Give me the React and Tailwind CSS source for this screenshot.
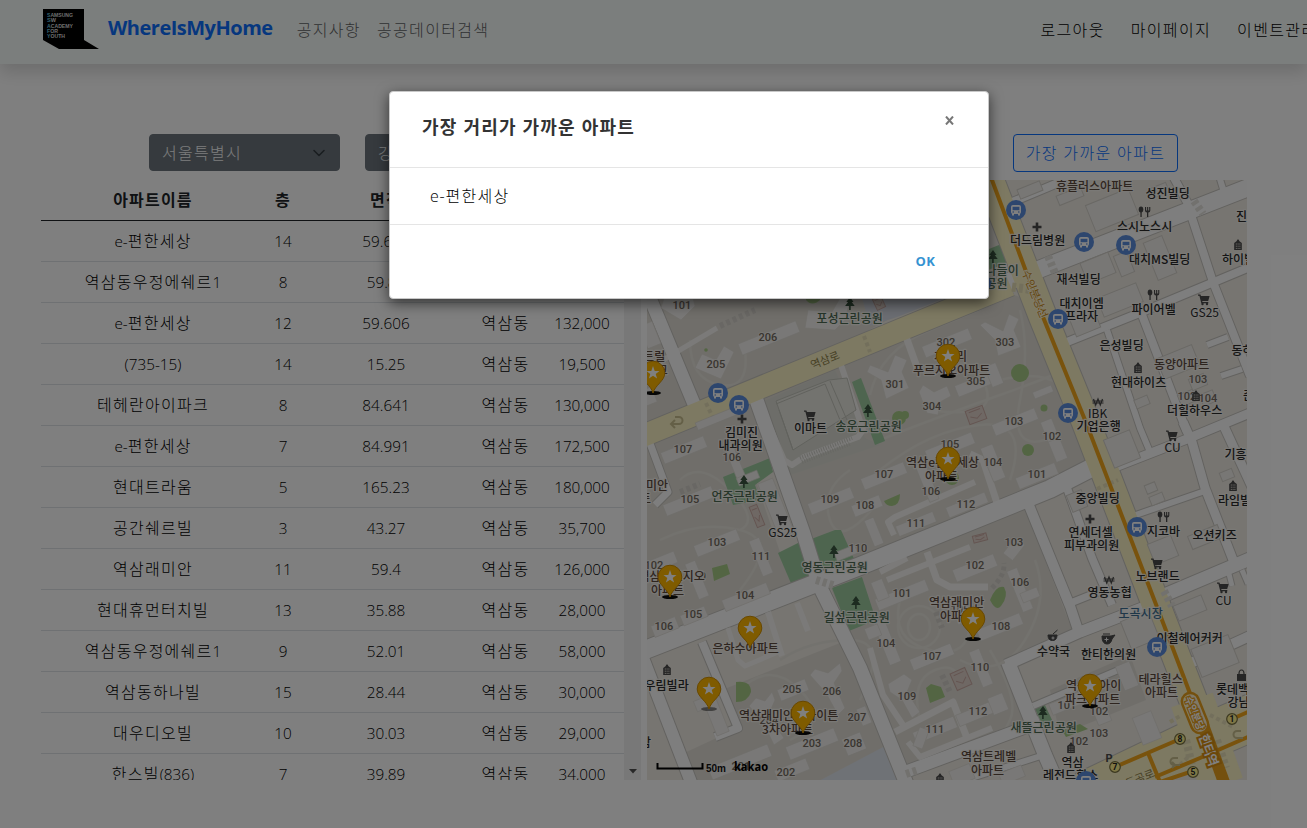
import React from "react";

const KR = "font-['Open_Sans','Noto_Sans_CJK_KR',sans-serif]";

const rows = [
  ["e-편한세상", "14", "59.606", "역삼동", "128,000"],
  ["역삼동우정에쉐르1", "8", "59.88", "역삼동", "62,000"],
  ["e-편한세상", "12", "59.606", "역삼동", "132,000"],
  ["(735-15)", "14", "15.25", "역삼동", "19,500"],
  ["테헤란아이파크", "8", "84.641", "역삼동", "130,000"],
  ["e-편한세상", "7", "84.991", "역삼동", "172,500"],
  ["현대트라움", "5", "165.23", "역삼동", "180,000"],
  ["공간쉐르빌", "3", "43.27", "역삼동", "35,700"],
  ["역삼래미안", "11", "59.4", "역삼동", "126,000"],
  ["현대휴먼터치빌", "13", "35.88", "역삼동", "28,000"],
  ["역삼동우정에쉐르1", "9", "52.01", "역삼동", "58,000"],
  ["역삼동하나빌", "15", "28.44", "역삼동", "30,000"],
  ["대우디오빌", "10", "30.03", "역삼동", "29,000"],
  ["한스빌(836)", "7", "39.89", "역삼동", "34,000"],
];

// Hangul is set slightly wider than the Latin digits beside it.
function Mixed({ text }) {
  return text
    .split(/([가-힣]+)/)
    .filter(Boolean)
    .map((part, i) =>
      /[가-힣]/.test(part) ? (
        <span key={i} className="text-[16px] tracking-[1.25px]">{part}</span>
      ) : (
        <span key={i}>{part}</span>
      )
    );
}

// ---- Map data: [points, width] ----
const roads = [
  ["1000,285 1050,265 1260,183", 17],
  ["1173,176 1187,202 1192,218 1213,282 1250,376", 8],
  ["1219,176 1224,192", 6],
  ["1062,344 1142,312 1250,267", 8],
  ["1142,315 1187,432", 8],
  ["1107,330 1140,428 1150,452", 6],
  ["1105,471 1187,439 1250,413", 9],
  ["1183,422 1192,442 1205,488 1235,565", 9],
  ["1130,517 1205,491", 6],
  ["1222,422 1252,487", 9],
  ["1155,599 1252,558", 13],
  ["1095,466 1050,489 860,566 640,652", 18],
  ["1067,488 1092,558 1112,605", 8],
  ["1028,503 1070,606 1080,636", 10],
  ["1068,604 1098,592", 7],
  ["1006,665 1080,632 1150,605", 11],
  ["1008,662 1045,755 1058,785", 14],
  ["1033,706 1123,668", 6],
  ["755,396 803,532 820,587 860,668 909,790", 14],
  ["640,270 650,298 694,404", 13],
  ["648,438 668,492 655,505", 7],
  ["905,772 1040,722", 12],
  ["965,780 1047,754", 6],
  ["702,642 738,728 715,737", 8],
  ["640,650 694,790", 12],
  ["1207,345 1228,337", 6],
  ["1221,376 1242,369", 6],
  ["1228,570 1232,586", 5],
  ["1242,570 1248,584", 5],
  ["1180,668 1250,636", 10],
  ["1010,203 1065,180", 8],
];
const lanes = [
  ["768,612 782,656", 6],
  ["797,603 808,631", 6],
  ["728,628 738,660 745,666 778,652", 5],
  ["758,400 784,460 792,465 804,457 858,437 863,430 840,362", 6],
  ["905,334 918,370", 7],
  ["907,558 880,572", 6],
  ["894,535 888,522 895,517 975,482", 6],
  ["970,454 983,460 997,503", 7],
  ["887,580 970,547", 6],
  ["927,552 937,580 950,587 988,587", 7],
  ["895,732 953,702 967,738", 7],
  ["870,648 883,695 905,728", 6],
  ["908,742 920,757 992,728", 6],
  ["658,363 717,328", 5],
];
const paths = [
  "M870 395 Q880 350 930 330 T1000 300",
  "M930 370 Q970 350 985 385 T930 410",
  "M1020 310 Q1030 350 1020 400 T1045 440",
  "M690 340 Q690 380 720 385 T745 350",
  "M880 470 Q930 430 980 425 T1010 480",
  "M900 600 Q890 640 930 650 T970 620",
  "M1035 560 Q1050 600 1025 640 T960 660",
  "M740 690 Q770 660 800 690 T790 740",
  "M990 650 Q1020 700 1010 720 T1000 735",
  "M920 720 Q910 680 935 670 T960 690",
  "M660 540 Q700 520 740 530 T740 590",
  "M680 480 Q700 460 730 490 T740 530",
  "M850 470 Q820 490 830 520 T880 500",
  "M780 660 Q810 640 850 640 T860 700",
  "M1000 380 Q1040 370 1060 385",
  "M880 440 Q930 420 1000 395 T1060 370",
];

// [cx, cy, w, h, rotation]
const bars = [
  [769, 338, 62, 12, -22], [684, 450, 46, 12, -22], [718, 418, 46, 8, -22], [689, 501, 52, 12, -22],
  [831, 501, 46, 12, -22], [947, 343, 50, 12, -22], [978, 383, 46, 12, -22], [994, 375, 12, 22, -22],
  [1015, 422, 46, 12, -22], [1053, 438, 38, 12, 68], [950, 447, 50, 12, -22], [993, 463, 36, 13, 68],
  [927, 482, 40, 10, 68], [884, 476, 46, 12, -22], [1037, 476, 42, 12, -22], [967, 505, 42, 11, -22],
  [916, 524, 40, 11, -22], [867, 506, 30, 12, -22], [874, 532, 28, 10, 68], [717, 543, 46, 12, -22],
  [761, 557, 38, 11, 68], [660, 563, 34, 12, -22], [697, 580, 38, 11, 68], [746, 597, 48, 12, -22],
  [694, 616, 26, 11, -22], [665, 627, 26, 12, -22], [793, 690, 30, 12, -22], [812, 744, 52, 14, -22],
  [854, 744, 20, 18, -22], [792, 770, 34, 12, -22], [740, 762, 64, 13, -22], [716, 716, 38, 13, 68],
  [702, 704, 14, 11, -22], [975, 568, 44, 13, -22], [902, 595, 54, 12, -22], [880, 590, 12, 20, -22],
  [887, 642, 46, 12, 68], [873, 632, 14, 12, -22], [1000, 627, 46, 12, -22], [932, 657, 44, 12, -22],
  [981, 668, 38, 11, 68], [980, 712, 48, 12, -22], [998, 704, 16, 18, -22], [935, 730, 44, 12, -22],
  [921, 738, 10, 20, 20], [1014, 549, 20, 12, -52], [1020, 590, 44, 11, 68], [1030, 595, 18, 10, -22],
  [864, 716, 18, 10, 68], [735, 462, 40, 9, 68], [748, 478, 22, 8, -22], [776, 508, 16, 58, -22],
  [1075, 700, 52, 12, -22], [1147, 728, 20, 29, -22], [1127, 676, 15, 26, -22], [1100, 710, 14, 28, -22],
  [1043, 392, 20, 7, -22], [645, 398, 20, 16, -22], [650, 335, 14, 24, -22], [1058, 450, 12, 22, -22],
  [960, 610, 14, 26, -22], [846, 553, 22, 9, -22], [1012, 775, 24, 12, -22], [962, 775, 22, 16, -22],
];
const lots = [
  [1112, 210, 46, 28, -22], [1098, 268, 30, 22, -22], [1124, 264, 14, 22, -22], [1160, 258, 20, 40, -22],
  [1120, 300, 42, 20, -22], [1083, 318, 26, 30, -22], [1178, 362, 38, 22, -22], [1142, 402, 14, 9, -22],
  [1198, 382, 16, 12, -22], [1187, 398, 16, 12, -22], [1208, 398, 14, 12, -22], [1122, 449, 28, 30, -22],
  [1151, 488, 11, 9, -22], [1157, 499, 14, 9, -22], [1163, 550, 25, 22, -22], [1205, 537, 32, 14, -22],
  [1227, 475, 13, 9, -22], [1190, 608, 30, 16, -22], [1077, 501, 16, 18, -22], [1215, 656, 40, 30, -22],
  [1140, 630, 30, 30, -22], [1030, 190, 24, 10, -22], [1160, 190, 16, 10, -22], [1070, 196, 26, 10, -22],
];
const polys = [
  "661,308 664,298 693,298 695,306 681,320",
  "695,368 702,354 716,360 724,346 734,352 721,379",
  "980,325 985,322 1003,331 1009,314 1019,319 1014,330 1021,347 998,356 995,340",
  "867,372 870,365 888,372 895,355 907,360 902,372 909,388 886,399 881,380",
  "919,392 923,385 934,392 947,386 951,396 940,402 938,415 927,413",
  "810,675 815,669 828,673 840,663 842,671 834,683 845,708 838,715 826,693",
  "749,706 756,698 765,701 772,692 775,700 768,716 784,738 774,745 762,720",
  "888,684 904,674 912,680 907,692 920,712 912,718 902,700 890,692",
  "805,328 808,310 832,312 840,298 850,300 845,320 835,330",
];
const parks = [
  "723,477 770,458 773,472 755,485 760,500 733,505",
  "852,382 861,378 885,441 875,445",
  "778,553 802,541 815,577 793,588",
  "806,541 835,530 841,530 855,561 825,573",
  "832,588 862,577 876,620 849,631",
  "1034,707 1044,703 1053,722 1043,726",
  "984,251 1004,243 1010,262 988,270",
];

// [text, x, baseline y]
const numbers = [
  ["101", 682, 309], ["206", 768, 341], ["205", 716, 368], ["107", 683, 453], ["106", 732, 461],
  ["105", 690, 503], ["109", 830, 503], ["108", 865, 509], ["302", 946, 346], ["303", 1005, 346],
  ["301", 895, 388], ["304", 932, 410], ["305", 976, 385], ["103", 1014, 425], ["102", 1052, 440],
  ["105", 950, 448], ["104", 993, 466], ["106", 931, 495], ["107", 884, 478], ["101", 1037, 478],
  ["112", 966, 508], ["111", 916, 527], ["103", 717, 546], ["111", 761, 560], ["102", 654, 569],
  ["104", 745, 599], ["105", 693, 618], ["106", 664, 630], ["110", 858, 552], ["205", 792, 693],
  ["206", 832, 695], ["204", 769, 724], ["203", 812, 747], ["208", 853, 747], ["207", 857, 721],
  ["202", 786, 776], ["201", 741, 770], ["103", 1014, 546], ["102", 975, 569], ["106", 1020, 586],
  ["101", 902, 597], ["104", 886, 647], ["105", 960, 613], ["108", 1001, 630], ["107", 932, 660],
  ["110", 980, 671], ["109", 907, 700], ["112", 978, 715], ["111", 935, 733], ["101", 1067, 709],
  ["102", 1099, 715], ["103", 1099, 737], ["102", 1079, 745], ["103", 1198, 383], ["102", 1187, 400],
  ["104", 1208, 402], ["0", 703, 580],
];
const labels = [
  ["휴플러스아파트", 1094, 191, "apt"], ["성진빌딩", 1167, 198], ["스시노스시", 1144, 231], ["진", 1241, 221],
  ["더드림병원", 1037, 245], ["대치MS빌딩", 1159, 264], ["하이빌", 1238, 264], ["재석빌딩", 1078, 284],
  ["대치이엠", 1081, 308], ["프라자", 1081, 321], ["파이어벨", 1153, 314], ["GS25", 1204, 317, "en"],
  ["은성빌딩", 1121, 350], ["동양아파트", 1181, 369, "apt"], ["동하", 1242, 355], ["현대하이츠", 1138, 387],
  ["더힐하우스", 1194, 415], ["IBK", 1097, 418, "en"], ["기업은행", 1098, 431], ["준", 1248, 400],
  ["CU", 1172, 452, "en"], ["기흥", 1235, 459], ["중앙빌딩", 1097, 503], ["라임빌", 1234, 505],
  ["연세더셀", 1090, 537], ["피부과의원", 1091, 550], ["지코바", 1163, 536], ["오션키즈", 1214, 540],
  ["노브랜드", 1157, 581], ["영동농협", 1109, 597], ["CU", 1223, 605, "en"], ["도곡시장", 1140, 618, "mk"],
  ["이철헤어커커", 1189, 643], ["수약국", 1053, 656], ["한티한의원", 1108, 659], ["테라힐스", 1160, 684, "apt"],
  ["아파트", 1161, 697, "apt"], ["롯데백", 1232, 694], ["강남", 1238, 707], ["역삼동아이", 1093, 690, "apt"],
  ["파크아파트", 1092, 704, "apt"], ["새뜰근린공원", 1043, 732, "pk"], ["역삼", 1072, 767], ["레전드힐스", 1070, 780],
  ["역삼트레벨", 988, 761, "apt"], ["아파트", 987, 775, "apt"], ["역삼래미안", 956, 607, "apt"],
  ["아파트", 956, 621, "apt"], ["길섶근린공원", 856, 622, "pk"], ["영동근린공원", 834, 572, "pk"],
  ["GS25", 782, 537, "en"], ["언주근린공원", 744, 501, "pk"], ["송운근린공원", 868, 431, "pk"],
  ["이마트", 810, 433], ["김미진", 741, 437], ["내과의원", 740, 450], ["포성근린공원", 849, 323, "pk"],
  ["강남센트럴", 637, 361, "apt"], ["아이파크", 645, 375, "apt"], ["래미안", 651, 490, "apt"], ["아파트", 634, 503, "apt"],
  ["역삼푸르지오", 671, 581, "apt"], ["아파트", 667, 595, "apt"], ["은하수아파트", 745, 653, "apt"],
  ["우림빌라", 666, 690], ["삼", 645, 747], ["역삼래미안펜타이튼", 788, 720, "apt"], ["3차아파트", 787, 734, "apt"],
  ["역삼e편한세상", 942, 467, "apt"], ["아파트", 941, 481, "apt"], ["개나리", 950, 361, "apt"],
  ["푸르지오아파트", 951, 375, "apt"], ["개나들이", 996, 275, "pk"], ["공원", 996, 288, "pk"],
];
const tones = { apt: "#5d4a3e", pk: "#4c6a52", mk: "#3f6f93", en: "#2c2c2c" };

const buses = [[1016, 210], [1084, 242], [1126, 245], [1058, 319], [718, 393], [739, 405], [1068, 413], [1137, 527], [1157, 647], [1086, 781], [981, 283]];
const carts = [[810, 415], [782, 519], [1204, 299], [1172, 435], [1157, 563], [1223, 587]];
const forks = [[1144, 212], [1153, 295], [1163, 517]];
const plus = [[1037, 227], [742, 419], [1090, 519]];
const houses = [[1238, 245], [1138, 368], [1196, 396], [1233, 486], [667, 670], [1071, 748], [940, 779]];
const wons = [[1098, 402], [1109, 580]];
const trees = [[850, 304], [868, 411], [744, 482], [834, 552], [856, 603], [1043, 713], [993, 257]];
const pins = [[653, 373], [948, 356], [948, 459], [670, 577], [750, 628], [709, 689], [803, 713], [973, 619], [1090, 686]];
const exits = [["1", 1232, 719], ["8", 1180, 739], ["7", 1115, 767], ["5", 1193, 772]];

function KakaoMap() {
  return (
    <svg className="block h-[600px] w-[600px] shrink-0" viewBox="647 180 600 600">
      <rect x="647" y="180" width="600" height="600" fill="#eeeae2" />
      <polygon points="640,440 1000,290 1020,297 1095,462 1050,480 860,558 640,645" fill="#e0ddd5" />
      <polygon points="640,280 960,280 860,335 640,425" fill="#e0ddd5" />
      <polygon points="830,586 1025,508 1072,630 1008,658 1038,722 905,770" fill="#e0ddd5" />
      <polygon points="738,728 722,690 860,635 900,785 690,785 680,755" fill="#e0ddd5" />
      <polygon points="1050,690 1130,655 1146,700 1060,735" fill="#e0ddd5" />
      <polygon points="762,402 835,370 865,438 880,445 790,475" fill="#dadbd2" />
      <polygon points="815,783 887,745 903,783" fill="#dfe4ec" />
      <polygon points="862,298 945,298 900,316 870,326" fill="#d7dbe4" />
      <polygon points="752,470 775,462 808,545 780,552" fill="#eeeae2" />
      <g fill="none" stroke="#e7e4dc" strokeWidth="2.5">
        {paths.map((d, i) => <path key={i} d={d} />)}
        <ellipse cx="919" cy="627" rx="11" ry="13" />
        <circle cx="919" cy="627" r="21" />
      </g>
      {parks.map((p, i) => <polygon key={i} points={p} fill="#9ccb9e" />)}

      <g fill="none" strokeLinejoin="round" stroke="#c6c4bf">
        {roads.map(([p, w], i) => <polyline key={i} points={p} strokeWidth={w + 2} />)}
        <path d="M640 437 L1010 285" strokeWidth="24" />
        <path d="M986 170 L1043 317 L1085 420 L1160 615 L1197 710" strokeWidth="30" />
        <path d="M1085 795 L1200 740 L1260 714" strokeWidth="48" />
      </g>
      <g fill="none" strokeLinejoin="round" stroke="#fdfdfd">
        {lanes.map(([p, w], i) => <polyline key={i} points={p} strokeWidth={w} stroke="#f6f5f2" />)}
        {roads.map(([p, w], i) => <polyline key={i} points={p} strokeWidth={w} />)}
      </g>
      <g fill="none" stroke="#faf2c4" strokeLinejoin="round">
        <path d="M640 437 L1010 285" strokeWidth="22" />
        <path d="M986 170 L1043 317 L1085 420 L1160 615 L1197 710" strokeWidth="28" />
        <path d="M1085 795 L1200 740 L1260 714" strokeWidth="46" />
        <path d="M1192 700 L1222 785" strokeWidth="44" />
      </g>
      <g stroke="#e6dfb8" strokeWidth="4" strokeDasharray="4 3" fill="none">
        <path d="M706 403 L714 420" /><path d="M1097 489 L1118 480" /><path d="M1012 287 L1034 290" strokeWidth="9" />
        <path d="M864 336 L870 352" /><path d="M1170 722 L1180 716" /><path d="M1180 765 L1188 757" />
        <path d="M1210 715 L1235 728" /><path d="M1186 740 L1192 765" strokeWidth="8" /><path d="M1217 740 L1226 768" strokeWidth="8" />
      </g>
      <g stroke="#e4e2dd" strokeWidth="4" strokeDasharray="4 3" fill="none">
        <path d="M1194 201 L1203 214" strokeWidth="8" /><path d="M1048 256 L1055 273" strokeWidth="8" />
        <path d="M816 580 L836 586" strokeWidth="8" /><path d="M1164 591 L1172 606" strokeWidth="8" />
        <path d="M906 774 L918 770" strokeWidth="8" /><path d="M720 326 L755 310" strokeWidth="6" stroke="#d2cfc8" />
        <path d="M680 492 L700 484" strokeWidth="6" stroke="#d2cfc8" />
        <path d="M936 612 L942 628" strokeWidth="6" stroke="#d2cfc8" /><path d="M992 588 Q1005 575 1004 563" strokeWidth="5" stroke="#d2cfc8" />
        <path d="M942 675 L950 692" strokeWidth="6" stroke="#d2cfc8" />
      </g>

      <g fill="#f3f1ee" stroke="#dddad3" strokeWidth="0.6">
        {polys.map((p, i) => <polygon key={i} points={p} />)}
        {bars.map(([x, y, w, h, r], i) => (
          <rect key={i} x={x - w / 2} y={y - h / 2} width={w} height={h} transform={`rotate(${r} ${x} ${y})`} />
        ))}
      </g>
      <g fill="#f1efeb" stroke="#d4d1ca" strokeWidth="1">
        {lots.map(([x, y, w, h, r], i) => (
          <rect key={i} x={x - w / 2} y={y - h / 2} width={w} height={h} transform={`rotate(${r} ${x} ${y})`} />
        ))}
      </g>
      <g fill="none" stroke="#c3c4bb" strokeWidth="1">
        <polygon points="776,401 829,380 847,378 856,410 793,450" fill="#e6e6de" />
        <path d="M776 404 L825 384 L840 420 M779 410 L793 450 M830 381 L847 420" />
        <path d="M800 458 L852 438 M802 462 L850 444" strokeDasharray="1 1.5" strokeWidth="4" stroke="#cfcfc8" />
      </g>

      <g fill="#a6cb86">
        <circle cx="1020" cy="373" r="9" /><circle cx="1028" cy="450" r="6" /><circle cx="1044" cy="408" r="3.5" />
        <circle cx="899" cy="418" r="7" /><circle cx="905" cy="415" r="4" /><circle cx="952" cy="478" r="7" /><circle cx="706" cy="350" r="1.8" />
        <path d="M884 501 L900 494 Q900 505 892 506 Q886 506 884 501Z" />
        <path d="M712 568 L727 564 L730 574 L714 581Z" />
        <path d="M736 682 Q751 680 751 692 Q748 702 736 702Z" />
        <path d="M926 688 L931 684 L941 687 L945 697 L930 703Z" />
        <path d="M990 600 Q996 585 1004 587 Q1009 596 1001 606 Q996 612 990 600Z" />
        <path d="M1062 730 L1080 724 L1088 729 L1066 737Z" />
        <path d="M806 300 Q812 307 820 300 V296 H806Z" />
      </g>
      <g fill="#dfd0c9" stroke="#c9aba3" strokeWidth="1">
        {[[976, 415, 18, 14, -20], [961, 679, 16, 18, -24], [757, 516, 8, 22, -22], [980, 538, 14, 7, -15], [879, 303, 9, 12, -25]].map(([x, y, w, h, r], i) => (
          <g key={i} transform={`rotate(${r} ${x} ${y})`}>
            <rect x={x - w / 2} y={y - h / 2} width={w} height={h} />
            <path d={`M${x - w / 3} ${y} L${x} ${y + h / 4} L${x + w / 3} ${y} M${x - w / 3} ${y - h / 3} H${x + w / 3}`} fill="none" />
          </g>
        ))}
      </g>

      <g fill="none" stroke="#f2a61b" strokeWidth="4">
        <path d="M989 172 L1043 317 L1085 420 L1162 620 L1191 696" />
        <path d="M1115 767 L1180 739 M1148 753 L1160 782 M1155 777 L1200 758 L1250 736 M1160 782 L1193 771 M1232 719 L1250 711" />
        <path d="M1203 725 L1225 785" strokeWidth="12" stroke="#e9a01c" />
      </g>
      <g transform="rotate(68 1195 713)">
        <rect x="1174" y="704.500" width="42" height="17" rx="8.500" fill="#fff4cf" stroke="#e9a01c" strokeWidth="2.500" />
        <text x="1195" y="717" fontSize="10" fontWeight="700" textAnchor="middle" fill="#fff" stroke="#e9a01c" strokeWidth="2.500" paintOrder="stroke" textLength="35">수인분당</text>
      </g>
      <text transform="translate(1209 750) rotate(70)" y="5" fontSize="13" fontWeight="700" textAnchor="middle" fill="#fff" stroke="#d98f12" strokeWidth="4" paintOrder="stroke" textLength="33">한티역</text>
      <text transform="translate(1035 294) rotate(68)" y="4" fontSize="11" textAnchor="middle" fill="#c98e1c" stroke="#fff6d6" strokeWidth="2" paintOrder="stroke">수인분당선</text>
      <g fill="#8d8048" fontSize="11">
        <text transform="translate(825 360) rotate(-22)" y="4" textAnchor="middle" textLength="30">역삼로</text>
        <text transform="translate(1140 778) rotate(-22)" y="4" textAnchor="middle" textLength="30">도곡로</text>
      </g>
      <g fill="none" stroke="#c9bf8e" strokeWidth="2">
        <path d="M672 424 h7 a3 3 0 0 0 0 -7 h-4 M675 420 l-4 4 4 4" />
        <path d="M1180 765 h-6 a3 3 0 0 1 0 -7 h4 M1172 762 l3 3 -3 3" />
        <path d="M1243 738 h-6 a3 3 0 0 1 0 -7 h4" />
      </g>

      <g fontSize="11" fontFamily="Roboto, sans-serif" fontWeight="500" fill="#746a61" textAnchor="middle" stroke="#f3f1ed" strokeWidth="1.5" paintOrder="stroke">
        {numbers.map(([t, x, y], i) => <text key={i} x={x} y={y}>{t}</text>)}
      </g>

      <g fill="#4a4a4a">
        {trees.map(([x, y], i) => (
          <path key={i} fill="#3b5640" d={`M${x} ${y - 7} l3.5 5 h-1.8 l3 4 h-4 v4 h-1.6 v-4 h-4 l3 -4 h-1.8Z`} />
        ))}
        {carts.map(([x, y], i) => (
          <g key={i}>
            <path d={`M${x - 6} ${y - 4.5} h2.4 l.6 1.5 h8.6 l-1.4 5 h-6 l.3 1 h5.8 v1.2 h-7 l-1.9 -7.4 h-1.4Z`} />
            <circle cx={x - 1.5} cy={y + 5} r="1.2" /><circle cx={x + 3} cy={y + 5} r="1.2" />
          </g>
        ))}
        {forks.map(([x, y], i) => (
          <g key={i}>
            <ellipse cx={x - 3} cy={y - 2.5} rx="2.3" ry="3" /><rect x={x - 3.6} y={y} width="1.3" height="5" />
            <path d={`M${x + 1} ${y - 5} v3.5 q0 2 2 2 v4.5 h1.3 v-4.5 q2 0 2 -2 v-3.5 h-1.1 v3.5 h-1 v-3.5 h-1.1 v3.5 h-1 v-3.5Z`} />
          </g>
        ))}
        {plus.map(([x, y], i) => (
          <path key={i} d={`M${x - 1.3} ${y - 4.5} h2.6 v3.2 h3.2 v2.6 h-3.2 v3.2 h-2.6 v-3.2 h-3.2 v-2.6 h3.2Z`} />
        ))}
        {houses.map(([x, y], i) => (
          <g key={i}>
            <path d={`M${x - 3.8} ${y + 5} v-7 l2.3 -1.8 l1 -1.7 h1 l1 1.7 l2.3 1.8 v7Z`} />
            <path d={`M${x - 2.2} ${y - 1} h1 m.8 0 h1 m.8 0 h1 M${x - 2.2} ${y + 1.2} h1 m.8 0 h1 m.8 0 h1 M${x - 2.2} ${y + 3.4} h1 m.8 0 h1 m.8 0 h1`} stroke="#e8e4dc" strokeWidth="1" />
          </g>
        ))}
        {wons.map(([x, y], i) => (
          <path key={i} d={`M${x - 4.5} ${y - 3} l2.2 6 l2.3 -6 l2.3 6 l2.2 -6 M${x - 5.5} ${y - 1} h11 M${x - 5.5} ${y + 1} h11`} fill="none" stroke="#4a4a4a" strokeWidth="1.2" />
        ))}
        <path d="M1048 635 h9 q0 5.500 -4.500 5.500 q-4.500 0 -4.500 -5.500Z M1053 634 l4.500 -4" stroke="#4a4a4a" />
        <path d="M1102 636 h9 l4 -1 -3 4 q-1 5 -5 5 q-5 0 -5 -8Z M1103 634 h7" stroke="#4a4a4a" />
        <path d="M1053 636.500 v3 m-1.500 -1.500 h3 M1106.500 637.500 v4 m-2 -2 h4" stroke="#eee" strokeWidth="1" />
        <path d="M1237 674 h9 v7 h-9Z" /><path d="M1239 674 q0 -4 2.500 -4 t2.500 4" fill="none" stroke="#4a4a4a" strokeWidth="1.200" />
        <text x="1109" y="762" fontSize="11" fontWeight="700" textAnchor="middle" fontFamily="Roboto, sans-serif">P</text>
      </g>

      <g transform="translate(0.6 0)" fontSize="12" fontWeight="500" textAnchor="middle" fontFamily="'Noto Sans CJK KR', sans-serif" stroke="#f6f4ef" strokeOpacity=".85" strokeWidth="2.4" strokeLinejoin="round" paintOrder="stroke">
        {labels.map(([t, x, y, k], i) => (
          <text key={i} x={x} y={y} fill={tones[k] || "#2a2a2a"} fontWeight={k === "en" ? 400 : 500}>{t}</text>
        ))}
      </g>

      {buses.map(([x, y], i) => (
        <g key={i}>
          <circle cx={x} cy={y} r="10" fill="#5a8cdc" />
          <rect x={x - 5} y={y - 5} width="10" height="9" rx="2" fill="#fff" />
          <rect x={x - 3.4} y={y - 3.2} width="6.8" height="3.4" fill="#5a8cdc" />
          <rect x={x - 3.5} y={y + 1.4} width="1.5" height="1.2" fill="#5a8cdc" /><rect x={x + 2} y={y + 1.4} width="1.5" height="1.2" fill="#5a8cdc" />
          <rect x={x - 4} y={y + 3.5} width="2" height="2" fill="#fff" /><rect x={x + 2} y={y + 3.5} width="2" height="2" fill="#fff" />
        </g>
      ))}
      {exits.map(([t, x, y]) => (
        <g key={t}>
          <circle cx={x} cy={y} r="5.300" fill="#fff08c" stroke="#777040" strokeWidth="1.200" />
          <text x={x} y={y + 3} fontSize="8.500" fontWeight="700" fontFamily="Roboto, sans-serif" textAnchor="middle" fill="#222">{t}</text>
        </g>
      ))}

      {pins.map(([x, y], i) => (
        <g key={i} transform={`translate(${x} ${y})`}>
          <ellipse cx="0" cy="20" rx="8" ry="2" fill="#000" opacity={i === 5 ? 0.45 : i === 4 ? 0 : 0.95} />
          <path d="M0 20 C-2 12 -11.800 8 -11.800 0 A11.800 11.800 0 1 1 11.800 0 C11.800 8 2 12 0 20Z" fill="#ffb700" stroke="#d18f00" strokeWidth="1" />
          <path d="M0 -7 L1.700 -2 L6.500 -2 L2.700 1 L4.100 5.600 L0 2.800 L-4.100 5.600 L-2.700 1 L-6.500 -2 L-1.700 -2Z" fill="#fff" />
        </g>
      ))}
      <path d="M657.500 763 v5.500 h45 v-5.500" fill="none" stroke="#000" strokeWidth="2" />
      <text x="706" y="772" fontSize="10" fontWeight="700" fontFamily="'Liberation Sans', sans-serif" fill="#111">50m</text>
      <text x="734" y="771" fontSize="13" fontWeight="700" fontFamily="'Open Sans', sans-serif" fill="#000" textLength="34" lengthAdjust="spacingAndGlyphs">kakao</text>
    </svg>
  );
}

function Logo() {
  return (
    <svg className="h-10 w-14" viewBox="0 0 56 40">
      <path d="M0 0 H41 V31 L56 40 H16 L0 31Z" fill="#000" />
      <g fontSize="5.200" fontWeight="600" fontFamily="'Liberation Sans', sans-serif" fill="#dcdcdc">
        {["SAMSUNG", "SW", "ACADEMY", "FOR", "YOUTH"].map((t, i) => (
          <text key={t} x="4" y={8 + i * 5.3} textLength={[26, 9, 26, 11, 18][i]} lengthAdjust="spacingAndGlyphs">
            <tspan fill="#6fc6e0">{t[0]}</tspan>{t.slice(1)}
          </text>
        ))}
      </g>
    </svg>
  );
}

function Select({ children }) {
  return (
    <div className="flex h-[37px] w-[191px] items-center justify-between rounded border border-[#6c757d] bg-[#6c757d] pl-3 pr-3 text-[16px] font-light tracking-[1.3px] text-[#f8f9fa]">
      <span>{children}</span>
      <svg className="h-4 w-4" viewBox="0 0 16 16" fill="none" stroke="#343a40" strokeWidth="1.6" strokeLinecap="round" strokeLinejoin="round">
        <path d="M3 5.500l5 5 5-5" />
      </svg>
    </div>
  );
}

export default function App() {
  return (
    <div className={`relative h-[828px] w-full overflow-hidden bg-white text-[#212529] ${KR}`}>
      <header className="flex h-16 w-full items-start bg-[#f7fcfa] pl-[43px] whitespace-nowrap shadow-[0_8px_16px_rgba(0,0,0,0.15)]">
        <div className="pt-[9px]"><Logo /></div>
        <span className="ml-[9px] mt-[13px] w-[165px] text-[20px] leading-[30px] font-bold tracking-[-0.5px] text-[#0d6efd]">WhereIsMyHome</span>
        <nav className="ml-6 mt-[18px] flex gap-4 text-[16px] leading-6 font-light tracking-[1.35px] text-[#5f6264]">
          <span>공지사항</span>
          <span>공공데이터검색</span>
        </nav>
        <nav className="ml-[551px] mt-[18px] flex gap-[26px] text-[16px] leading-6 font-light tracking-[1.35px] text-black">
          <span>로그아웃</span>
          <span>마이페이지</span>
          <span>이벤트관리</span>
        </nav>
      </header>

      <div className="mt-[70px] flex h-[38px] items-start pl-[149px]">
        <Select>서울특별시</Select>
        <div className="ml-[25px]"><Select>강남구</Select></div>
        <div className="ml-[25px]"><Select>역삼동</Select></div>
        <button className="ml-auto mr-[129px] h-[38px] w-[165px] rounded border border-[#0d6efd] text-[16px] font-light tracking-[1.35px] whitespace-nowrap text-[#0d6efd]">
          가장 가까운 아파트
        </button>
      </div>

      <main className="mt-2 flex h-[600px] pl-[41px]">
        <div className="h-[600px] w-[583px] overflow-hidden">
          <table className="w-[583px] table-fixed border-collapse text-center text-[15.3px]">
            <colgroup>
              <col className="w-[224px]" /><col className="w-[36px]" /><col className="w-[170px]" /><col className="w-[69px]" /><col className="w-[84px]" />
            </colgroup>
            <thead>
              <tr className="h-[40px] border-b border-[#212529]">
                {["아파트이름", "층", "면적", "법정동", "가격"].map((h) => (
                  <th key={h} className="p-0 text-[16px] leading-6 font-bold tracking-[1.2px] whitespace-nowrap">{h}</th>
                ))}
              </tr>
            </thead>
            <tbody className="font-light text-black">
              {rows.map((r, i) => (
                <tr key={i} className="h-[41px] border-b border-[#dee2e6]">
                  {r.map((c, j) => (
                    <td key={j} className="p-0 leading-6 whitespace-nowrap"><Mixed text={c} /></td>
                  ))}
                </tr>
              ))}
            </tbody>
          </table>
        </div>
        <div className="mr-[6px] flex h-[600px] w-[17px] items-end justify-center bg-[#f1f1f1] pb-[6px]">
          <svg className="h-[5px] w-2" viewBox="0 0 8 5"><path d="M0 0H8L4 4.500Z" fill="#505050" /></svg>
        </div>
        <KakaoMap />
      </main>

      <div className="absolute inset-0 flex items-start bg-black/50 pt-[91px] pl-[389px]">
        <section className="flex h-[208px] w-[600px] flex-col rounded border border-[#c8c8c8] bg-white shadow-[0_4px_14px_rgba(0,0,0,0.6)]">
          <div className="flex h-[76px] items-start justify-between border-b border-[#e5e5e5] pl-8 pr-[34px]">
            <h2 className="mt-[21px] text-[18px] leading-7 font-bold tracking-[1.2px] text-[#333]">가장 거리가 가까운 아파트</h2>
            <svg className="mt-[24px] h-[9px] w-[9px]" viewBox="0 0 9 9" stroke="#777" strokeWidth="2"><path d="M1 .5l7 8M8 .5l-7 8" /></svg>
          </div>
          <div className="flex h-[57px] items-center border-b border-[#e5e5e5] pl-10 text-[16px] font-light tracking-[0.8px] text-black">
            <p><Mixed text="e-편한세상" /></p>
          </div>
          <div className="flex flex-1 items-center justify-end pr-[53px] text-[13px] font-bold tracking-[0.2px] text-[#3593d2]">OK</div>
        </section>
      </div>
    </div>
  );
}
